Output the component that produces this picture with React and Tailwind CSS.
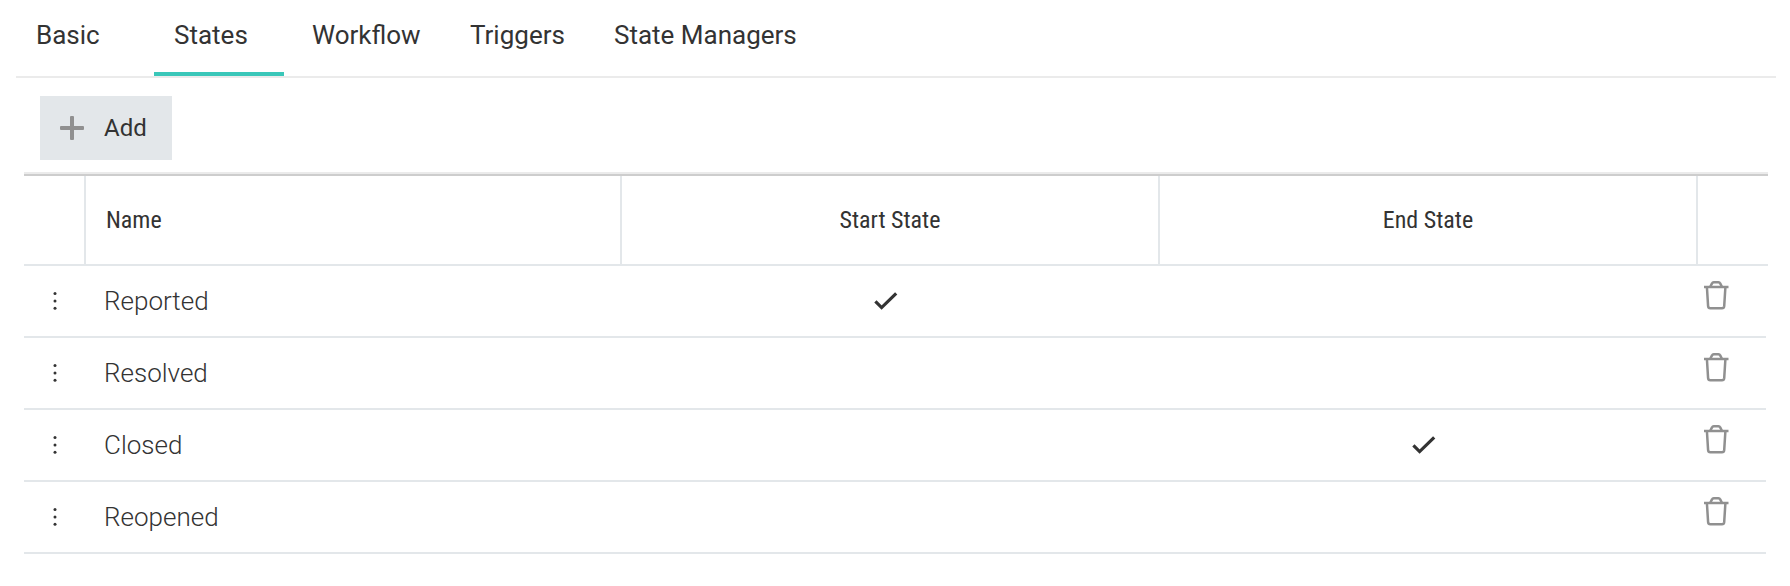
import React, { useState } from 'react';

const tabs = [
  { name: 'Basic', width: 'w-[130px]' },
  { name: 'States', width: 'w-[130px]' },
  { name: 'Workflow', width: 'w-[150px]' },
  { name: 'Triggers', width: 'w-[136px]' },
  { name: 'State Managers', width: 'w-[224px]' },
];

const states = [
  { name: 'Reported', start: true, end: false },
  { name: 'Resolved', start: false, end: false },
  { name: 'Closed', start: false, end: true },
  { name: 'Reopened', start: false, end: false },
];

const columns = 'grid grid-cols-[60px_536px_538px_538px_70px]';

function PlusIcon() {
  return (
    <svg className="h-6 w-6" viewBox="0 0 24 24" fill="#909090">
      <rect x="0" y="10" width="24" height="4" rx="1" />
      <rect x="10" y="0" width="4" height="24" rx="1" />
    </svg>
  );
}

function CheckIcon() {
  return (
    <svg className="h-[18px] w-6" viewBox="0 0 24 18" fill="none" stroke="#333" strokeWidth="3.2">
      <path d="M1.4 9.4L7.6 15.6L22.2 1.4" />
    </svg>
  );
}

function TrashIcon() {
  return (
    <svg className="h-[30px] w-[26px]" viewBox="0 0 26 30" fill="none" stroke="#909090" strokeWidth="2.5">
      <path d="M1 7H25.5" />
      <path d="M7.4 6.5L9 3.4Q9.5 2.3 10.7 2.3H15.5Q16.7 2.3 17.2 3.4L18.8 6.5" />
      <path d="M3.9 7L5.1 26.2Q5.3 28.3 7.3 28.3H19Q21 28.3 21.2 26.2L22.4 7" />
    </svg>
  );
}

function DragIcon() {
  return (
    <svg className="h-5 w-1" viewBox="0 0 4 20" fill="#333">
      <circle cx="2" cy="2.6" r="1.5" />
      <circle cx="2" cy="10" r="1.5" />
      <circle cx="2" cy="17.2" r="1.5" />
    </svg>
  );
}

export default function App() {
  const [active, setActive] = useState('States');

  return (
    <div className="h-[586px] w-[1790px] overflow-hidden bg-white font-[Roboto,sans-serif] text-[#333]">
      <div className="ml-4 flex h-[78px] w-[1760px] gap-2 border-b-2 border-[#ebebeb]">
        {tabs.map((tab) => (
          <button
            key={tab.name}
            onClick={() => setActive(tab.name)}
            className={`${tab.width} flex h-[76px] items-start whitespace-nowrap border-b-4 pl-5 pt-[15px] text-left text-[26px] leading-10 ${
              active === tab.name ? 'border-[#3ac7b9]' : 'border-transparent'
            }`}
          >
            {tab.name}
          </button>
        ))}
      </div>

      <div className="ml-6 h-[94px] px-4 pt-[18px]">
        <button className="flex h-16 w-[132px] items-center bg-[#e3e7ea] pl-5 text-2xl">
          <PlusIcon />
          <span className="ml-5">Add</span>
        </button>
      </div>

      <div className="ml-6 w-[1744px]">
        <div className="border-t-2 border-[#ebebeb]">
          <div
            className={`${columns} h-[92px] border-b-2 border-t-2 border-b-[#e3e7ea] border-t-[#cdcdcd] font-['Roboto_Condensed','Roboto',sans-serif] text-2xl [font-stretch:condensed]`}
          >
            <div></div>
            <div className="flex items-center border-l-2 border-[#e3e7ea] pl-5">Name</div>
            <div className="flex items-center justify-center border-l-2 border-[#e3e7ea]">Start State</div>
            <div className="flex items-center justify-center border-l-2 border-[#e3e7ea]">End State</div>
            <div className="border-l-2 border-[#e3e7ea]"></div>
          </div>
        </div>

        {states.map((state) => (
          <div key={state.name} className={`${columns} h-[72px] w-[1742px] items-center border-b-2 border-[#e3e7ea]`}>
            <div className="flex justify-center pl-px">
              <DragIcon />
            </div>
            <div className="pl-5 text-[26px] font-light">{state.name}</div>
            <div className="flex justify-center pb-px pr-1.5">{state.start && <CheckIcon />}</div>
            <div className="flex justify-center pb-px pr-1.5">{state.end && <CheckIcon />}</div>
            <div className="pb-3 pl-[7px]">
              <TrashIcon />
            </div>
          </div>
        ))}
      </div>
    </div>
  );
}
